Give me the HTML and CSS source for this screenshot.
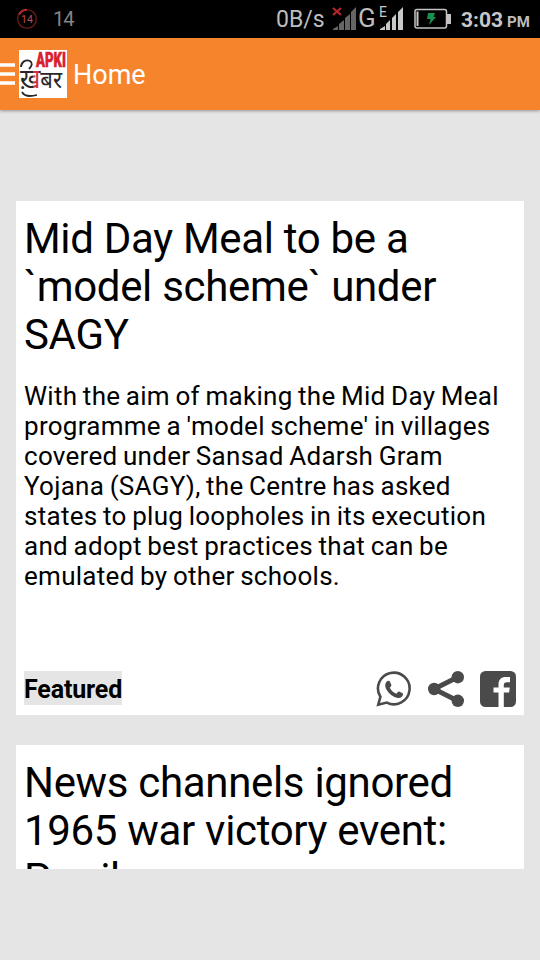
FILE: index.html
```
<!DOCTYPE html>
<html lang="en">
<head>
    <meta charset="UTF-8">
    <meta name="viewport" content="width=device-width, initial-scale=1.0">
    <title>Apki Khabar - Home</title>
    <link rel="stylesheet" href="styles.css">
</head>
<body>
    <div class="status-bar">
        <svg class="speed-icon" width="22" height="22" viewBox="0 0 22 22">
            <circle cx="11" cy="11" r="9.3" fill="none" stroke="#5c1718" stroke-width="1.6"/>
            <path d="M3 6.500A9.300 9.300 0 0 1 11 1.700" fill="none" stroke="#b52a2e" stroke-width="2"/>
            <text x="11" y="14.800" text-anchor="middle" class="speed-text">14</text>
        </svg>
        <span class="count">14</span>
        <span class="rate">0B/s</span>
        <svg class="signal-one" width="26" height="26" viewBox="0 0 26 26">
            <path d="M1 25v-1l5-3v4zM7 25v-6l5-4v10zM13 25V13l5-4v16zM19 25V7l5-5v23z" fill="#656565"/>
            <path d="M1 3l8 7M9 3l-8 7" stroke="#b8252b" stroke-width="2.200"/>
        </svg>
        <span class="network">G</span>
        <svg class="signal-two" width="26" height="26" viewBox="0 0 26 26">
            <path d="M2 25v-1l5-3v4zM8 25v-6l4-4v10zM14 25V13l4-4v16zM20 25V7l5-5v23z" fill="#c8c8c8"/>
            <text x="1" y="12" class="edge-text">E</text>
        </svg>
        <svg class="battery" width="38" height="22" viewBox="0 0 38 22">
            <rect x="1" y="1.500" width="31.500" height="18.500" rx="2" fill="none" stroke="#c4c4c4" stroke-width="1.500"/>
            <path d="M3.500 3.500v14.500" stroke="#c4c4c4" stroke-width="2"/>
            <path d="M33 6h4v10h-4z" fill="#c4c4c4"/>
            <path d="M14 5h7l-1.500 4h2.500l-7 8 1.500-6h-3.500z" fill="#18914e"/>
        </svg>
        <span class="clock">3:03</span>
        <span class="meridiem">PM</span>
    </div>

    <header class="app-bar">
        <svg class="menu" width="15" height="24" viewBox="0 0 15 24">
            <path d="M0 3h15M0 12h15M0 21h15" stroke="#fff" stroke-width="3.600"/>
        </svg>
        <svg class="logo" width="48" height="48" viewBox="0 0 48 48">
            <defs>
                <linearGradient id="ink" gradientUnits="userSpaceOnUse" x1="0" y1="0" x2="48" y2="0">
                    <stop offset="0.3" stop-color="#2b2527"/>
                    <stop offset="0.3" stop-color="#c9343c"/>
                    <stop offset="0.41" stop-color="#c9343c"/>
                    <stop offset="0.41" stop-color="#2b2527"/>
                </linearGradient>
            </defs>
            <rect width="48" height="48" fill="#fff"/>
            <text x="17" y="17" textLength="30" lengthAdjust="spacingAndGlyphs" class="logo-apki">APKI</text>
            <text x="1" y="38" textLength="42" lengthAdjust="spacingAndGlyphs" class="logo-khabar" fill="url(#ink)"><tspan class="logo-kha">ख़</tspan>बर</text>
            <!-- brush tails -->
            <path d="M2 17c0-5 5-8 9-6 3 2 2 5-1 8" fill="none" stroke="#2b2527" stroke-width="1.800"/>
            <path d="M3 42c2 4 7 5 15 3" fill="none" stroke="#2b2527" stroke-width="1.800"/>
        </svg>
        <h1>Home</h1>
    </header>

    <main class="feed">
        <article class="card">
            <h2>Mid Day Meal to be a<br>`model scheme` under<br>SAGY</h2>
            <p>With the aim of making the Mid Day Meal<br>programme a 'model scheme' in villages<br>covered under Sansad Adarsh Gram<br>Yojana (SAGY), the Centre has asked<br>states to plug loopholes in its execution<br>and adopt best practices that can be<br>emulated by other schools.</p>
            <div class="card-footer">
                <span class="tag">Featured</span>
                <div class="share">
                    <svg width="36" height="36" viewBox="0 0 36 36">
                        <path d="M2.200 33.800L4.400 25.800A15.800 15.800 0 1 1 10.800 31.600z" fill="none" stroke="#4a4a4a" stroke-width="2.600"/>
                        <path d="M10.700 10.600c1.200-1.300 2.700-1.200 3.200 0l1.400 3.200c.3.900-.2 1.500-1.500 2.900 1.500 3 3.700 4.800 6.700 6 1-1.100 1.600-2.400 2.600-2.100l3.500 1.700c1 .6.300 2.800-1 3.700-2.200 1.500-4.700 1-8-.6-3.400-1.600-6.300-4.900-7.700-8-1.100-2.600-.8-5 .8-6.800z" fill="#4a4a4a"/>
                    </svg>
                    <svg width="36" height="36" viewBox="0 0 36 36">
                        <path d="M30 6L6 18l24 12" fill="none" stroke="#4a4a4a" stroke-width="4.800"/>
                        <circle cx="29.800" cy="6.200" r="6.200" fill="#4a4a4a"/>
                        <circle cx="6.200" cy="18" r="6.200" fill="#4a4a4a"/>
                        <circle cx="29.800" cy="29.800" r="6.200" fill="#4a4a4a"/>
                    </svg>
                    <svg width="36" height="36" viewBox="0 0 36 36">
                        <rect width="36" height="36" rx="5.500" fill="#4a4a4a"/>
                        <path d="M18.500 36V21.500h-5v-5h5v-3c0-5 2.500-7.500 7.500-7.500h4v5.200h-3c-2.300 0-3.200.8-3.200 3v2.300h6l-.7 5h-5.300V36z" fill="#fff"/>
                    </svg>
                </div>
            </div>
        </article>

        <article class="card card-cut">
            <h2>News channels ignored<br>1965 war victory event:<br>Parrikar</h2>
        </article>
    </main>
</body>
</html>
```
FILE: styles.css
```
body {
    margin: 0;
    height: 960px;
    overflow: hidden;
    background: #e5e5e5;
    color: #000;
    font-family: Roboto, "Noto Sans", sans-serif;
}

svg {
    display: block;
    flex-shrink: 0;
}

.status-bar {
    display: flex;
    align-items: center;
    box-sizing: border-box;
    height: 38px;
    padding-left: 16px;
    background: #000;
    color: #bdbdbd;
    white-space: nowrap;
}

.speed-text {
    font-size: 10.5px;
    fill: #c04a50;
}

.count {
    width: 223px;
    margin-left: 15px;
    font-size: 20px;
    letter-spacing: -1px;
    line-height: 38px;
    color: #858585;
}

.rate {
    width: 56px;
    font-size: 23px;
}

.network {
    width: 20px;
    font-size: 26px;
    line-height: 30px;
    margin-top: -2px;
}

.signal-one,
.signal-two {
    margin-top: -2px;
}

.edge-text {
    font-size: 14px;
    fill: #c8c8c8;
}

.battery {
    margin-left: 10px;
}

.clock {
    width: 42px;
    margin-left: 9px;
    font-size: 21px;
    font-weight: 700;
    line-height: 26px;
    margin-top: 2px;
    color: #c8c8c8;
}

.meridiem {
    margin: 6px 0 0 4px;
    font-size: 15px;
    font-weight: 700;
}

.app-bar {
    display: flex;
    align-items: center;
    height: 72px;
    background: #f5842d;
    box-shadow: 0 1px 3px rgba(0, 0, 0, 0.35);
}

.logo {
    margin-left: 4px;
}

.logo-apki {
    font-size: 21px;
    font-weight: 900;
    fill: #d9202e;
    stroke: #d9202e;
    stroke-width: 0.6px;
}

.logo-khabar {
    font-family: "Noto Sans", "Noto Sans Devanagari", sans-serif;
    font-size: 24px;
}

.logo-kha {
    font-size: 27px;
}

h1 {
    margin: 2px 0 0 6px;
    font-size: 27px;
    font-weight: 400;
    color: #fff;
}

.feed {
    padding: 91px 16px 0;
}

.card {
    box-sizing: border-box;
    height: 514px;
    margin-bottom: 30px;
    padding: 14px 8px 10px;
    display: flex;
    flex-direction: column;
    background: #fff;
    white-space: nowrap;
}

.card-cut {
    height: 124px;
    overflow: hidden;
}

h2 {
    margin: 0;
    font-size: 42px;
    font-weight: 400;
    line-height: 48px;
    letter-spacing: -0.33px;
    word-spacing: 0.1px;
}

p {
    margin: 22px 0 0;
    font-size: 26px;
    line-height: 30px;
    letter-spacing: 0.28px;
    word-spacing: -1.2px;
}

.card-footer {
    display: flex;
    justify-content: space-between;
    align-items: center;
    margin-top: auto;
}

.tag {
    height: 34px;
    line-height: 37px;
    font-size: 25px;
    font-weight: 700;
    letter-spacing: -0.15px;
    background: #e5e5e5;
}

.share {
    display: flex;
    gap: 16px;
    margin-bottom: -2px;
}
```
